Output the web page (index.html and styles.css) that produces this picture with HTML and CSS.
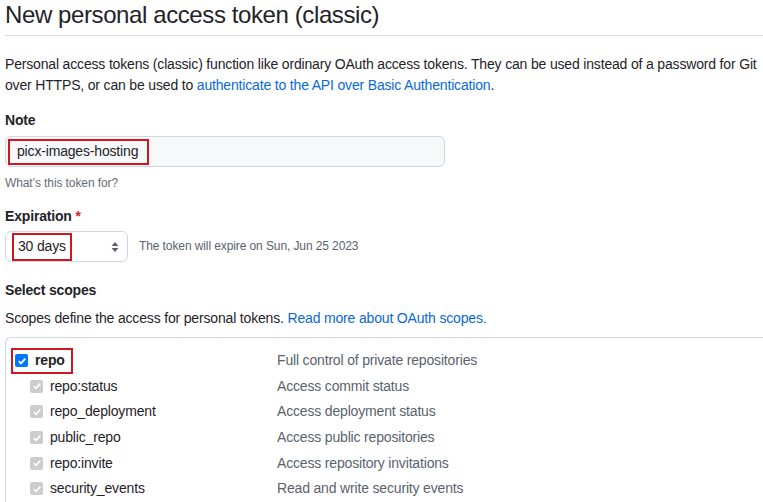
FILE: index.html
```html
<!DOCTYPE html>
<html>
<head>
<meta charset="utf-8">
<link rel="stylesheet" href="styles.css">
</head>
<body>
<div class="page">
  <h1 class="title">New personal access token (classic)</h1>
  <p class="intro">Personal access tokens (classic) function like ordinary OAuth access tokens. They can be used instead of a password for Git over HTTPS, or can be used to <a class="link" href="#">authenticate to the API over Basic Authentication</a>.</p>

  <div class="field">
    <div class="label">Note</div>
    <div class="input"><span class="mark mark-note">picx-images-hosting</span></div>
    <div class="hint">What’s this token for?</div>
  </div>

  <div class="field">
    <div class="label">Expiration <span class="req">*</span></div>
    <div class="exp-row">
      <div class="select">
        <span class="mark mark-sel">30 days</span>
        <svg class="arrows" width="8" height="12" viewBox="0 0 8 12"><path d="M4 1 L7.5 5 H0.5 Z M4 11 L7.5 7 H0.5 Z" fill="#59636e"/></svg>
      </div>
      <span class="exp-note">The token will expire on Sun, Jun 25 2023</span>
    </div>
  </div>

  <div class="label scopes-label">Select scopes</div>
  <p class="scopes-desc">Scopes define the access for personal tokens. <a class="link" href="#">Read more about OAuth scopes.</a></p>

  <div class="scopes">
    <div class="row top">
      <div class="name"><span class="mark mark-repo"><span class="cb cb-on"><svg width="10" height="10" viewBox="0 0 10 10"><path d="M1.8 5.2 L4 7.4 L8.3 2.6" fill="none" stroke="#fff" stroke-width="1.8"/></svg></span><b>repo</b></span></div>
      <div class="desc">Full control of private repositories</div>
    </div>
    <div class="row sub">
      <div class="name"><span class="cb cb-dis"><svg width="10" height="10" viewBox="0 0 10 10"><path d="M1.8 5.2 L4 7.4 L8.3 2.6" fill="none" stroke="#fff" stroke-width="1.6"/></svg></span>repo:status</div>
      <div class="desc">Access commit status</div>
    </div>
    <div class="row sub">
      <div class="name"><span class="cb cb-dis"><svg width="10" height="10" viewBox="0 0 10 10"><path d="M1.8 5.2 L4 7.4 L8.3 2.6" fill="none" stroke="#fff" stroke-width="1.6"/></svg></span>repo_deployment</div>
      <div class="desc">Access deployment status</div>
    </div>
    <div class="row sub">
      <div class="name"><span class="cb cb-dis"><svg width="10" height="10" viewBox="0 0 10 10"><path d="M1.8 5.2 L4 7.4 L8.3 2.6" fill="none" stroke="#fff" stroke-width="1.6"/></svg></span>public_repo</div>
      <div class="desc">Access public repositories</div>
    </div>
    <div class="row sub">
      <div class="name"><span class="cb cb-dis"><svg width="10" height="10" viewBox="0 0 10 10"><path d="M1.8 5.2 L4 7.4 L8.3 2.6" fill="none" stroke="#fff" stroke-width="1.6"/></svg></span>repo:invite</div>
      <div class="desc">Access repository invitations</div>
    </div>
    <div class="row sub">
      <div class="name"><span class="cb cb-dis"><svg width="10" height="10" viewBox="0 0 10 10"><path d="M1.8 5.2 L4 7.4 L8.3 2.6" fill="none" stroke="#fff" stroke-width="1.6"/></svg></span>security_events</div>
      <div class="desc">Read and write security events</div>
    </div>
  </div>
</div>
</body>
</html>
```

FILE: styles.css
```css
html, body {
  margin: 0;
  padding: 0;
  background: #ffffff;
  overflow: hidden;
}
body {
  font-family: "Liberation Sans", Arial, sans-serif;
  font-size: 14px;
  line-height: 21px;
  letter-spacing: -0.17px;
  color: #1f2328;
}
.page {
  padding-left: 5px;
}
.title {
  margin: 0;
  font-size: 24px;
  font-weight: 400;
  line-height: 30px;
  letter-spacing: -0.4px;
  padding-top: 0;
  padding-bottom: 5px;
  border-bottom: 1px solid #d8dee4;
}
.intro {
  margin: 18px 0 0 0;
}
.link {
  color: #0969da;
  text-decoration: none;
}
.field {
  margin-top: 14px;
}
.label {
  font-weight: bold;
}
.req {
  color: #cf222e;
}
.input {
  margin-top: 5px;
  width: 436px;
  height: 29px;
  border: 1px solid #d0d7de;
  border-radius: 6px;
  background: #f6f8fa;
  display: flex;
  align-items: center;
  padding-left: 2px;
}
.mark {
  border: 2px solid #d0161f;
  display: inline-flex;
  align-items: center;
}
.mark-note {
  height: 22px;
  padding: 0 9px 0 7px;
}
.hint {
  margin-top: 7px;
  font-size: 12px;
  line-height: 18px;
  letter-spacing: -0.1px;
  color: #656d76;
}
.field + .field {
  margin-top: 14px;
}
.exp-row {
  margin-top: 4px;
  display: flex;
  align-items: center;
}
.select {
  height: 29px;
  border: 1px solid #d0d7de;
  border-radius: 6px;
  background: #ffffff;
  display: flex;
  align-items: center;
  justify-content: space-between;
  padding: 0 8px 0 6px;
  box-sizing: content-box;
  width: 107px;
}
.mark-sel {
  height: 24px;
  padding: 0 4px 0 4px;
}
.arrows {
  display: block;
}
.exp-note {
  margin-left: 11px;
  font-size: 12px;
  letter-spacing: -0.1px;
  color: #59636e;
}
.scopes-label {
  margin-top: 18px;
}
.scopes-desc {
  margin: 7px 0 0 0;
}
.scopes {
  margin-top: 8px;
  border: 1px solid #d0d7de;
  border-right: none;
  border-radius: 6px 0 0 0;
  padding-top: 10px;
  width: 800px;
}
.row {
  display: flex;
  height: 25.6px;
  align-items: center;
}
.name {
  width: 266px;
  display: flex;
  align-items: center;
}
.row.top .name {
  padding-left: 5px;
}
.row.sub .name {
  padding-left: 24px;
  width: 247px;
}
.mark-repo {
  height: 22px;
  padding: 0 6px 0 2px;
}
.cb {
  width: 13px;
  height: 13px;
  border-radius: 2px;
  display: inline-flex;
  align-items: center;
  justify-content: center;
  margin-right: 7px;
}
.cb-on {
  background: #0075ff;
}
.cb-dis {
  background: #cdcdcd;
}
.desc {
  color: #59636e;
}
```
